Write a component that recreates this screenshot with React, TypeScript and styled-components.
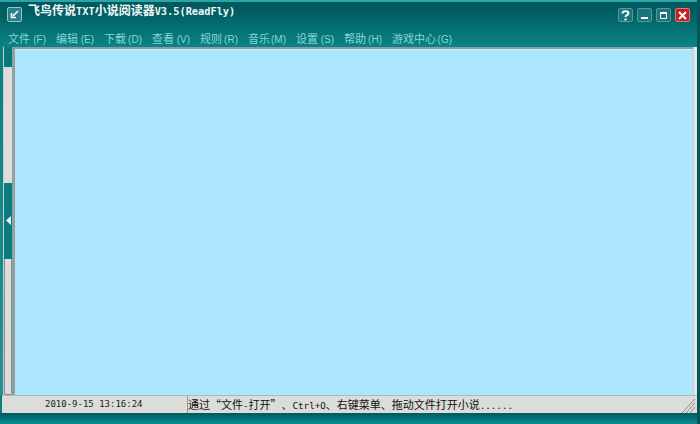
import React from "react";
import styled, { createGlobalStyle } from "styled-components";

const GlobalStyle = createGlobalStyle`
  html, body { margin: 0; padding: 0; background: #0a7f80; }
  body { width: 700px; height: 424px; overflow: hidden; }
`;

const Frame = styled.div`
  width: 700px;
  height: 424px;
  box-sizing: border-box;
  display: flex;
  flex-direction: column;
  font-family: "Noto Sans CJK SC", "Liberation Sans", sans-serif;
  background: #0a7f80;
  border-right: 3px solid #04555a;
`;

const Header = styled.div`
  height: 47px;
  flex: none;
  display: flex;
  flex-direction: column;
  border-top: 2px solid #2aa5a5;
  box-sizing: border-box;
  background: linear-gradient(#00585d 0%, #005f64 25%, #0a8486 100%);
`;

const TitleBar = styled.div`
  height: 26px;
  display: flex;
  align-items: flex-start;
  padding: 0 7px 0 7px;
`;

const AppIcon = styled.div`
  width: 15px;
  height: 15px;
  box-sizing: border-box;
  margin-top: 5px;
  border: 1px solid #8cc;
  border-radius: 2px;
  background: #2d7f86;
  display: flex;
  align-items: center;
  justify-content: center;
`;

const Title = styled.div`
  margin-left: 6px;
  margin-top: 1px;
  color: #f2f8f8;
  font-size: 12px;
  font-weight: 700;
  line-height: 14px;
  white-space: nowrap;
`;

const Latin = styled.span`
  font-family: "DejaVu Sans Mono", monospace;
  font-size: 10.3px;
  font-weight: 700;
`;

const WindowButtons = styled.div`
  margin-left: auto;
  display: flex;
  gap: 4px;
  margin-top: 6px;
`;

const WindowButton = styled.div<{ $close?: boolean }>`
  width: 15px;
  height: 14px;
  box-sizing: border-box;
  border: 1px solid ${(p) => (p.$close ? "#d77" : "#4f9c9f")};
  border-radius: 2px;
  background: ${(p) => (p.$close ? "#c0201f" : "#1a7478")};
  display: flex;
  align-items: center;
  justify-content: center;
`;

const MenuBar = styled.div`
  display: flex;
  gap: 10px;
  padding: 3px 0 0 8px;
  height: 16px;
`;

const MenuItem = styled.div`
  color: #86d6d6;
  font-size: 11px;
  line-height: 14px;
  white-space: nowrap;
`;

const Hotkey = styled.span`
  display: inline-block;
  width: 16px;
  text-align: right;
  font-family: "Liberation Sans", sans-serif;
  font-size: 10px;
`;

const Middle = styled.div`
  flex: 1;
  display: flex;
  min-height: 0;
`;

const LeftEdge = styled.div`
  width: 3px;
  flex: none;
  background: linear-gradient(#0a7f80, #2b8f90);
`;

const SideStrip = styled.div`
  width: 12px;
  flex: none;
  display: flex;
  flex-direction: column;
  box-sizing: border-box;
  background: #dcdcd8;
  border-right: 3px solid #93a0a0;
  border-left: 1px solid #c4d0d0;
`;

const StripCap = styled.div`
  height: 20px;
  background: #0b7779;
`;

const StripGap = styled.div<{ $grow: number }>`
  flex: ${(p) => p.$grow};
  background: #e0dcdc;
`;

const StripEnd = styled(StripGap)`
  border: 1px solid #7d8f8f;
  border-top: none;
  border-radius: 0 0 2px 2px;
`;

const StripHandle = styled.div`
  height: 76px;
  background: #0b7b7d;
  display: flex;
  align-items: center;
  justify-content: center;
`;

const Reader = styled.div`
  flex: 1;
  background: #abe6fe;
  border-top: 2px solid #8f9a9a;
  box-shadow: inset 0 1px 0 #c8eefc;
`;

const RightEdge = styled.div`
  width: 4px;
  flex: none;
  box-sizing: border-box;
  background: #e2e8e8;
  border-left: 1px solid #c4cccc;
`;

const StatusBar = styled.div`
  height: 18px;
  flex: none;
  display: flex;
  box-sizing: border-box;
  margin-left: 2px;
  background: #dcdcd8;
  border-top: 1px solid #b4b8b4;
  font-size: 11px;
  color: #111;
`;

const Clock = styled.div`
  width: 185px;
  box-sizing: border-box;
  padding-left: 43px;
  font-family: "DejaVu Sans Mono", monospace;
  font-size: 9px;
  line-height: 17px;
  white-space: nowrap;
  color: #222;
`;

const Hint = styled.div`
  flex: 1;
  border-left: 1px solid #9a9a96;
  line-height: 16px;
  white-space: nowrap;
  position: relative;
  text-spacing-trim: space-all;
`;

const Mono = styled.span`
  font-family: "DejaVu Sans Mono", monospace;
  font-size: 9.2px;
`;

const Grip = styled.svg`
  position: absolute;
  right: 2px;
  bottom: 0;
`;

const Footer = styled.div`
  height: 11px;
  flex: none;
  background: linear-gradient(#00585d, #0a9092);
`;

const menus: [string, string][] = [
  ["文件", "(F)"],
  ["编辑", "(E)"],
  ["下载", "(D)"],
  ["查看", "(V)"],
  ["规则", "(R)"],
  ["音乐", "(M)"],
  ["设置", "(S)"],
  ["帮助", "(H)"],
  ["游戏中心", "(G)"],
];

const App: React.FC = () => (
  <Frame>
    <GlobalStyle />
    <Header>
      <TitleBar>
        <AppIcon>
          <svg width="9" height="9" viewBox="0 0 9 9">
            <path d="M8 1 L3 6 M1.5 3 V7.5 H6" stroke="#fff" strokeWidth="1.6" fill="none" />
          </svg>
        </AppIcon>
        <Title>
          飞鸟传说<Latin>TXT</Latin>小说阅读器<Latin>V3.5(ReadFly)</Latin>
        </Title>
        <WindowButtons>
          <WindowButton>
            <svg width="9" height="11" viewBox="0 0 9 11">
              <path d="M1.5 3.5 C1.5 0.5 7.5 0.5 7.5 3.2 C7.5 5.2 4.5 5 4.5 7" stroke="#fff" strokeWidth="2" fill="none" />
              <rect x="3.5" y="8.5" width="2" height="2" fill="#fff" />
            </svg>
          </WindowButton>
          <WindowButton>
            <svg width="9" height="9" viewBox="0 0 9 9">
              <rect x="1" y="6" width="7" height="2" fill="#fff" />
            </svg>
          </WindowButton>
          <WindowButton>
            <svg width="9" height="9" viewBox="0 0 9 9">
              <path d="M1.5 2 H7.5 V7.5 H1.5 Z" stroke="#fff" fill="none" />
              <rect x="1" y="1" width="7" height="2" fill="#fff" />
            </svg>
          </WindowButton>
          <WindowButton $close>
            <svg width="9" height="9" viewBox="0 0 9 9">
              <path d="M1 1 L8 8 M8 1 L1 8" stroke="#fff" strokeWidth="2" />
            </svg>
          </WindowButton>
        </WindowButtons>
      </TitleBar>
      <MenuBar>
        {menus.map(([label, key]) => (
          <MenuItem key={label}>
            {label}
            <Hotkey>{key}</Hotkey>
          </MenuItem>
        ))}
      </MenuBar>
    </Header>
    <Middle>
      <LeftEdge />
      <SideStrip>
        <StripCap />
        <StripGap $grow={116} />
        <StripHandle>
          <svg width="5" height="9" viewBox="0 0 5 9">
            <path d="M5 0 V9 L0 4.5 Z" fill="#e8f8f8" />
          </svg>
        </StripHandle>
        <StripEnd $grow={136} />
      </SideStrip>
      <Reader />
      <RightEdge />
    </Middle>
    <StatusBar>
      <Clock>2010-9-15 13:16:24</Clock>
      <Hint>
        通过“文件<Mono>-</Mono>打开”、<Mono>Ctrl+O</Mono>、右键菜单、拖动文件打开小说<Mono>......</Mono>
        <Grip width="14" height="15" viewBox="0 0 14 15">
          <path d="M14 1 L1 15 M14 5 L5 15 M14 9 L9 15" stroke="#8a8a86" fill="none" />
        </Grip>
      </Hint>
    </StatusBar>
    <Footer />
  </Frame>
);

export default App;
